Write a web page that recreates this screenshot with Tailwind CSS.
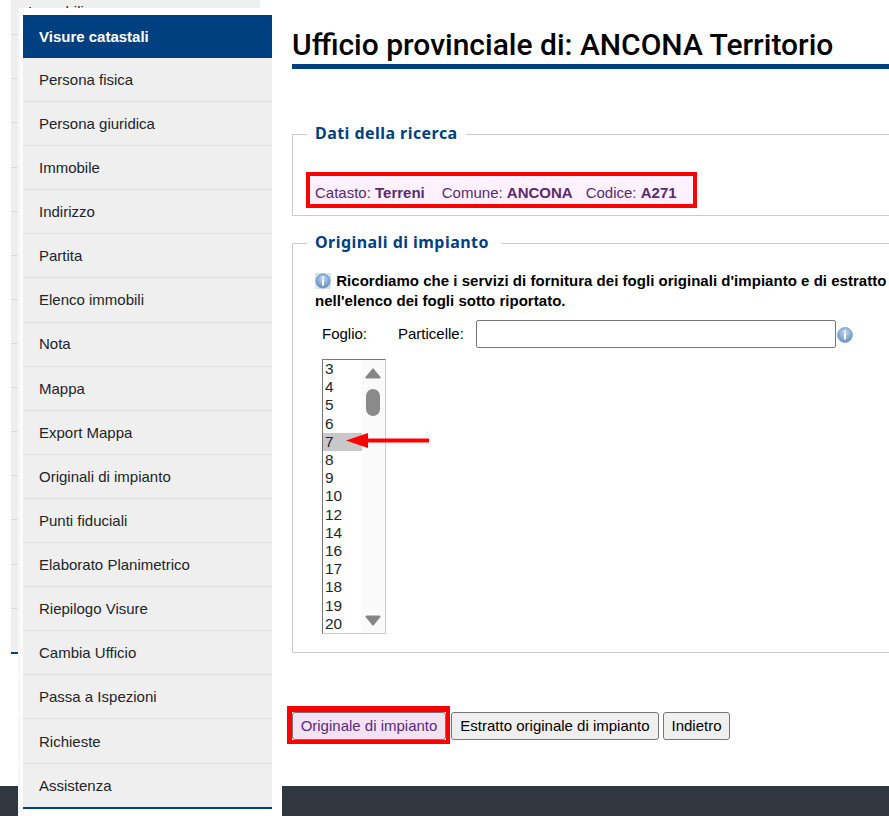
<!DOCTYPE html>
<html lang="it">
<head>
<meta charset="utf-8">
<title>Originali di impianto</title>
<script src="https://cdn.jsdelivr.net/npm/@tailwindcss/browser@4"></script>
</head>
<body class="bg-white">
<div class="relative w-[889px] h-[816px] overflow-hidden bg-white font-['Liberation_Sans',Arial,sans-serif] text-[15px] text-[#212529]">
  <!-- footer strip behind everything -->
  <div class="absolute left-0 right-0 top-[786px] h-[30px] bg-[#30373e]"></div>

  <!-- page underneath the open menu -->
  <div class="absolute left-[11px] top-0 w-[249px] h-[654px] bg-[#efefef] border-b-2 border-[#004080] overflow-hidden">
    <div class="absolute top-[1px] left-[17px] text-[#212529]">Immobili</div>
    <div class="absolute left-0 w-[7px] top-[34px] h-px bg-[#dddddd]"></div>
    <div class="absolute left-0 w-[7px] top-[78px] h-px bg-[#dddddd]"></div>
    <div class="absolute left-0 w-[7px] top-[122px] h-px bg-[#dddddd]"></div>
    <div class="absolute left-0 w-[7px] top-[167px] h-px bg-[#dddddd]"></div>
    <div class="absolute left-0 w-[7px] top-[211px] h-px bg-[#dddddd]"></div>
    <div class="absolute left-0 w-[7px] top-[255px] h-px bg-[#dddddd]"></div>
    <div class="absolute left-0 w-[7px] top-[299px] h-px bg-[#dddddd]"></div>
    <div class="absolute left-0 w-[7px] top-[343px] h-px bg-[#dddddd]"></div>
    <div class="absolute left-0 w-[7px] top-[387px] h-px bg-[#dddddd]"></div>
    <div class="absolute left-0 w-[7px] top-[431px] h-px bg-[#dddddd]"></div>
    <div class="absolute left-0 w-[7px] top-[475px] h-px bg-[#dddddd]"></div>
    <div class="absolute left-0 w-[7px] top-[519px] h-px bg-[#dddddd]"></div>
    <div class="absolute left-0 w-[7px] top-[564px] h-px bg-[#dddddd]"></div>
    <div class="absolute left-0 w-[7px] top-[608px] h-px bg-[#dddddd]"></div>
  </div>

  <div class="relative flex h-full">
    <!-- menu -->
    <div class="w-[282px] shrink-0 h-full pl-[18px] pt-[8px] pb-0">
      <div class="w-[264px] h-full bg-white pl-[5px] pt-[7px] pr-[10px] shadow-[inset_5px_0_5px_-3px_rgba(0,0,0,0.05)]">
        <nav class="w-[249px] border-b-2 border-[#004080] text-[#212529]">
          <div class="h-[43px] flex items-center pl-[16px] pt-[1px] bg-[#004080] text-white font-bold">Visure catastali</div>
          <div class="h-[44.1px] flex items-center pl-[16px] pt-[2px] bg-[#efefef] border-b border-[#dddddd]">Persona fisica</div>
          <div class="h-[44.1px] flex items-center pl-[16px] pt-[2px] bg-[#efefef] border-b border-[#dddddd]">Persona giuridica</div>
          <div class="h-[44.1px] flex items-center pl-[16px] pt-[2px] bg-[#efefef] border-b border-[#dddddd]">Immobile</div>
          <div class="h-[44.1px] flex items-center pl-[16px] pt-[1px] bg-[#efefef] border-b border-[#dddddd]">Indirizzo</div>
          <div class="h-[44.1px] flex items-center pl-[16px] pt-[1px] bg-[#efefef] border-b border-[#dddddd]">Partita</div>
          <div class="h-[44.1px] flex items-center pl-[16px] pt-[1px] bg-[#efefef] border-b border-[#dddddd]">Elenco immobili</div>
          <div class="h-[44.1px] flex items-center pl-[16px] pt-[1px] bg-[#efefef] border-b border-[#dddddd]">Nota</div>
          <div class="h-[44.1px] flex items-center pl-[16px] pt-[3px] bg-[#efefef] border-b border-[#dddddd]">Mappa</div>
          <div class="h-[44.1px] flex items-center pl-[16px] pt-[2px] bg-[#efefef] border-b border-[#dddddd]">Export Mappa</div>
          <div class="h-[44.1px] flex items-center pl-[16px] pt-[2px] bg-[#efefef] border-b border-[#dddddd]">Originali di impianto</div>
          <div class="h-[44.1px] flex items-center pl-[16px] pt-[2px] bg-[#efefef] border-b border-[#dddddd]">Punti fiduciali</div>
          <div class="h-[44.1px] flex items-center pl-[16px] pt-[2px] bg-[#efefef] border-b border-[#dddddd]">Elaborato Planimetrico</div>
          <div class="h-[44.1px] flex items-center pl-[16px] pt-[2px] bg-[#efefef] border-b border-[#dddddd]">Riepilogo Visure</div>
          <div class="h-[44.1px] flex items-center pl-[16px] pt-[1px] bg-[#efefef] border-b border-[#dddddd]">Cambia Ufficio</div>
          <div class="h-[44.1px] flex items-center pl-[16px] pt-[1px] bg-[#efefef] border-b border-[#dddddd]">Passa a Ispezioni</div>
          <div class="h-[44.1px] flex items-center pl-[16px] pt-[3px] bg-[#efefef] border-b border-[#dddddd]">Richieste</div>
          <div class="h-[43.1px] flex items-center pl-[16px] pt-[3px] bg-[#efefef]">Assistenza</div>
        </nav>
      </div>
    </div>

    <!-- main -->
    <main class="w-[800px] shrink-0 pl-[10px] text-black">
      <h1 class="mt-[24px] h-[45px] border-b-[5px] border-[#004080] font-['Roboto',sans-serif] font-medium text-[30px] leading-[42px] whitespace-nowrap">Ufficio provinciale di: ANCONA Territorio</h1>

      <fieldset class="mt-[55px] h-[92px] border border-[#cccccc] px-[22px] pt-0">
        <legend class="relative -top-[1px] px-[8px] -ml-[8px] font-['Noto_Sans',sans-serif] font-bold text-[16px] leading-[20px] tracking-[0.45px] text-[#004080]">Dati della ricerca</legend>
        <div class="mt-[28px] -ml-[9px] w-[391px] h-[36px] border-[4px] border-[#ff0000] bg-[#fdf0ff] pl-[5px] flex items-center pt-[6px] text-[#5a2a70] whitespace-pre"><span>Catasto: <b>Terreni</b></span><span class="ml-[17px]">Comune: <b>ANCONA</b></span><span class="ml-[13px]">Codice: <b>A271</b></span></div>
      </fieldset>

      <fieldset class="mt-[17px] h-[420px] border border-[#cccccc] px-[22px]">
        <legend class="relative -top-[1px] px-[8px] -ml-[8px] pr-[12px] font-['Noto_Sans',sans-serif] font-bold text-[16px] leading-[20px] tracking-[0.45px] text-[#004080]">Originali di impianto</legend>
        <p class="mt-[18px] font-bold leading-[20px] tracking-[0.03px] whitespace-nowrap">
          <svg class="inline-block align-[-3px] mr-[1px]" width="16" height="16" viewBox="0 0 16 16"><defs><radialGradient id="a" cx="50%" cy="35%" r="65%"><stop offset="0" stop-color="#c5d8ee"/><stop offset="1" stop-color="#5f8fc6"/></radialGradient></defs><rect width="16" height="16" fill="#d8e4f0"/><circle cx="8" cy="8" r="7" fill="url(#a)" stroke="#6f94bf"/><rect x="7" y="3.5" width="2" height="2" fill="#fff"/><rect x="7" y="6.5" width="2" height="6" fill="#fff"/></svg>
          Ricordiamo che i servizi di fornitura dei fogli originali d'impianto e di estratto<br>nell'elenco dei fogli sotto riportato.
        </p>
        <div class="mt-[9px] flex items-center h-[28px]">
          <span class="ml-[7px] w-[76px]">Foglio:</span>
          <span class="w-[78px]">Particelle:</span>
          <div class="w-[360px] h-[28px] rounded-[2px] border border-[#767676] bg-white"></div>
          <svg class="ml-[1px] mt-[1px]" width="16" height="16" viewBox="0 0 16 16"><defs><radialGradient id="b" cx="50%" cy="35%" r="65%"><stop offset="0" stop-color="#c5d8ee"/><stop offset="1" stop-color="#5f8fc6"/></radialGradient></defs><circle cx="8" cy="8" r="7.5" fill="url(#b)" stroke="#8fadd0"/><rect x="7" y="3.5" width="2" height="2" fill="#fff"/><rect x="7" y="6.5" width="2" height="6" fill="#fff"/></svg>
        </div>
        <div class="relative mt-[11px] ml-[7px] w-[64px] h-[275px] flex border border-[#767676] border-r-[#cccccc] border-b-[#cccccc] text-[15.4px] leading-[18.2px] text-[#212529] overflow-hidden">
          <ul class="w-[39px] pt-0">
            <li class="pl-[2px]">3</li>
            <li class="pl-[2px]">4</li>
            <li class="pl-[2px]">5</li>
            <li class="pl-[2px]">6</li>
            <li class="pl-[2px] bg-[#c8c8c8]">7</li>
            <li class="pl-[2px]">8</li>
            <li class="pl-[2px]">9</li>
            <li class="pl-[2px]">10</li>
            <li class="pl-[2px]">12</li>
            <li class="pl-[2px]">14</li>
            <li class="pl-[2px]">16</li>
            <li class="pl-[2px]">17</li>
            <li class="pl-[2px]">18</li>
            <li class="pl-[2px]">19</li>
            <li class="pl-[2px]">20</li>
          </ul>
          <div class="relative flex-1 bg-[#fafafa]">
            <svg class="absolute left-[3px] top-[7px]" width="16" height="12" viewBox="0 0 16 12"><path d="M8 1 L15.5 10 Q16 11.5 14.5 11.5 L1.5 11.5 Q0 11.5 .5 10 Z" fill="#858585"/></svg>
            <div class="absolute left-[4px] top-[29px] w-[14px] h-[27px] rounded-[7px] bg-[#8a8a8a]"></div>
            <svg class="absolute left-[3px] top-[255px]" width="16" height="12" viewBox="0 0 16 12"><path d="M8 11 L15.5 2 Q16 .5 14.5 .5 L1.5 .5 Q0 .5 .5 2 Z" fill="#858585"/></svg>
          </div>
        </div>
      </fieldset>

      <div class="relative mt-[59px] flex items-center gap-[5px] h-[28px]">
        <div class="absolute left-[-5px] top-[-6px] w-[163px] h-[38px] border-[#ff0000] border-l-[5px] border-t-[6px] border-r-[4px] border-b-[4px]"></div>
        <button class="h-[28px] w-[154px] rounded-[3px] border border-[#767676] bg-[#f2e2f2] text-[#5a2a80]">Originale di impianto</button>
        <button class="h-[28px] w-[208px] rounded-[3px] border border-[#767676] bg-[#efefef] text-black">Estratto originale di impianto</button>
        <button class="h-[28px] w-[67px] -ml-[1px] rounded-[3px] border border-[#767676] bg-[#efefef] text-black">Indietro</button>
      </div>
    </main>
  </div>

  <!-- red annotation arrow -->
  <svg class="absolute left-[340px] top-[428px]" width="95" height="24" viewBox="0 0 95 24"><path d="M89 10.5 H28 V5 L6 12.5 L28 20 V14.5 H89 Z" fill="#ff0000"/></svg>
</div>
</body>
</html>
